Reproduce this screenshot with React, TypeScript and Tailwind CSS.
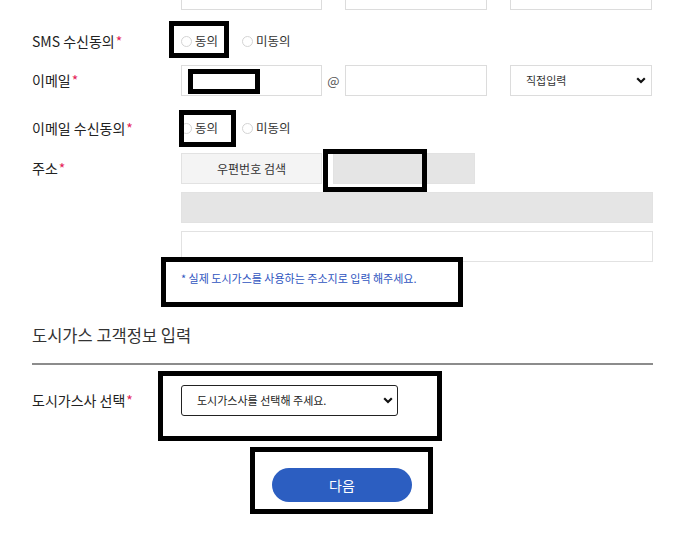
import React from "react";

const font = { fontFamily: '"Noto Sans CJK KR", "Noto Sans", sans-serif' };

function Label({ children }: { children: React.ReactNode }) {
  return (
    <div className="w-[149px] shrink-0 text-[14px] text-[#222]">
      {children}
      <span className="ml-[1px] text-[#e5245a]">*</span>
    </div>
  );
}

function Radio({ label }: { label: string }) {
  return (
    <div className="flex items-center text-[12.5px] text-[#333]">
      <span className="mr-[3px] inline-block h-[11px] w-[11px] rounded-full border border-[#d4d4d4] bg-white" />
      <span>{label}</span>
    </div>
  );
}

function Chevron() {
  return (
    <svg width="10" height="7" viewBox="0 0 10 7">
      <path d="M1.2 1.3 L5 5 L8.8 1.3" fill="none" stroke="#111" strokeWidth="2.2" />
    </svg>
  );
}

export default function App() {
  return (
    <div className="relative h-[551px] w-[700px] overflow-hidden bg-white" style={font}>
      <div className="ml-[32px] w-[621px]">
        {/* top cut-off inputs */}
        <div className="flex h-[10px] items-end overflow-hidden pl-[149px]">
          <div className="h-[31px] w-[141px] shrink-0 border border-[#dcdcdc]" />
          <div className="ml-[23px] h-[31px] w-[142px] shrink-0 border border-[#dcdcdc]" />
          <div className="ml-[23px] h-[31px] w-[142px] shrink-0 border border-[#dcdcdc]" />
        </div>

        {/* SMS */}
        <div className="mt-[12px] flex h-[38px] items-center">
          <Label>SMS 수신동의</Label>
          <div className="flex items-center">
            <Radio label="동의" />
            <div className="ml-[24px]">
              <Radio label="미동의" />
            </div>
          </div>
        </div>

        {/* Email */}
        <div className="mt-[5px] flex h-[31px] items-center">
          <Label>이메일</Label>
          <div className="h-[31px] w-[141px] shrink-0 border border-[#dcdcdc]" />
          <div className="flex w-[23px] justify-center text-[13px] text-[#555]">@</div>
          <div className="h-[31px] w-[142px] shrink-0 border border-[#dcdcdc]" />
          <div className="ml-[23px] flex h-[31px] w-[142px] shrink-0 items-center justify-between border border-[#dcdcdc] pl-[15px] pr-[5px] text-[11px] text-[#333]">
            <span>직접입력</span>
            <Chevron />
          </div>
        </div>

        {/* Email consent */}
        <div className="mt-[14px] flex h-[36px] items-center">
          <Label>이메일 수신동의</Label>
          <div className="flex items-center">
            <Radio label="동의" />
            <div className="ml-[24px]">
              <Radio label="미동의" />
            </div>
          </div>
        </div>

        {/* Address */}
        <div className="mt-[7px] flex">
          <div className="flex h-[31px] items-center">
            <Label>주소</Label>
          </div>
          <div className="flex w-[472px] flex-col">
            <div className="flex">
              <div className="flex h-[31px] w-[141px] items-center justify-center border border-[#e2e2e2] bg-[#f4f4f4] text-[12px] text-[#333]">
                우편번호 검색
              </div>
              <div className="ml-[11px] h-[31px] w-[142px] border border-[#e2e2e2] bg-[#e5e5e5]" />
            </div>
            <div className="mt-[8px] h-[31px] w-[472px] border border-[#e2e2e2] bg-[#e5e5e5]" />
            <div className="mt-[8px] h-[31px] w-[472px] border border-[#e2e2e2] bg-white" />
            <div className="mt-[8px] text-[11px] leading-[16px] text-[#2f55c0]">
              * 실제 도시가스를 사용하는 주소지로 입력 해주세요.
            </div>
          </div>
        </div>

        {/* Section heading */}
        <div className="mt-[39px] text-[16.5px] leading-[20px] text-[#333]">도시가스 고객정보 입력</div>
        <div className="mt-[18px] h-[2px] w-[621px] bg-[#8c8c8c]" />

        {/* Gas company select */}
        <div className="mt-[20px] flex h-[31px] items-center">
          <Label>도시가스사 선택</Label>
          <div className="flex h-[31px] w-[217px] items-center justify-between rounded-[3px] border-[1.5px] border-[#222] pl-[15px] pr-[4px] text-[11px] text-[#222]">
            <span>도시가스사를 선택해 주세요.</span>
            <Chevron />
          </div>
        </div>

        {/* Next button */}
        <div className="mt-[52px] flex pl-[240px]">
          <div className="flex h-[34px] w-[140px] items-center justify-center rounded-full bg-[#2c5ec1] text-[14px] text-white">
            다음
          </div>
        </div>
      </div>

      {/* annotation boxes drawn over the screenshot */}
      <div className="absolute left-[169px] top-[21px] h-[37px] w-[60px] border-[5px] border-black" />
      <div className="absolute left-[188px] top-[69px] h-[25px] w-[72px] border-[5px] border-black bg-white" />
      <div className="absolute left-[179px] top-[110px] h-[37px] w-[57px] border-[5px] border-black" />
      <div className="absolute left-[323px] top-[149px] h-[43px] w-[104px] border-[5px] border-black" />
      <div className="absolute left-[161px] top-[257px] h-[50px] w-[302px] border-[5px] border-black" />
      <div className="absolute left-[158px] top-[371px] h-[70px] w-[284px] border-[5px] border-black" />
      <div className="absolute left-[250px] top-[447px] h-[67px] w-[183px] border-[5px] border-black" />
    </div>
  );
}
